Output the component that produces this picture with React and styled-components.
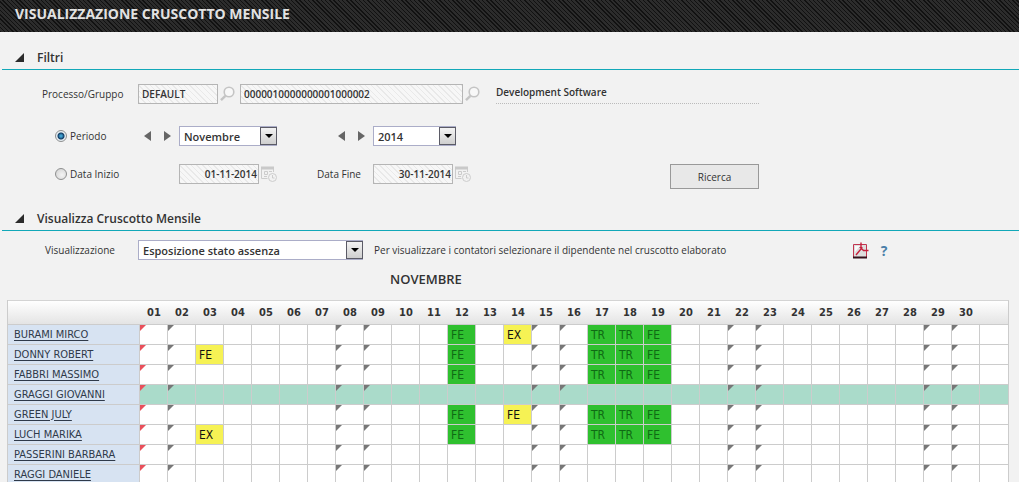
import React, { useState } from 'react';
import styled, { createGlobalStyle, css } from 'styled-components';

const months = [
  'Gennaio', 'Febbraio', 'Marzo', 'Aprile', 'Maggio', 'Giugno',
  'Luglio', 'Agosto', 'Settembre', 'Ottobre', 'Novembre', 'Dicembre',
];
const years = ['2013', '2014', '2015'];
const days = Array.from({ length: 30 }, (_, i) => i + 1);
const holidays = [1];
const weekends = [2, 8, 9, 15, 16, 22, 23, 29, 30];

const approved = { 12: 'FE', 17: 'TR', 18: 'TR', 19: 'FE' };

const employees = [
  { name: 'BURAMI MIRCO', approved, pending: { 14: 'EX' } },
  { name: 'DONNY ROBERT', approved, pending: { 3: 'FE' } },
  { name: 'FABBRI MASSIMO', approved, pending: {} },
  { name: 'GRAGGI GIOVANNI', approved: {}, pending: {}, selected: true },
  { name: 'GREEN JULY', approved, pending: { 14: 'FE' } },
  { name: 'LUCH MARIKA', approved, pending: { 3: 'EX' } },
  { name: 'PASSERINI BARBARA', approved: {}, pending: {} },
  { name: 'RAGGI DANIELE', approved: {}, pending: {} },
];

function SearchIcon() {
  return (
    <svg width="15" height="16" viewBox="0 0 15 16" fill="none" stroke="#c4c4c4">
      <circle cx="9" cy="6" r="4.8" fill="#f8f8f8" strokeWidth="1.6" />
      <path d="M5.400 9.800 L1 14.200" strokeWidth="2.400" />
    </svg>
  );
}

function CalendarIcon() {
  return (
    <svg width="16" height="16" viewBox="0 0 16 16" fill="none" stroke="#cccccc">
      <path d="M0 0.5h13v3H0z" fill="#c9c9c9" stroke="none" />
      <path d="M0.5 3v9.5h6M12.500 3v3" />
      <path d="M3.500 5.500h3v3h-3zM8 5.500h3M3 10.500h3" />
      <circle cx="11.500" cy="11.500" r="4" fill="#f2f2f2" />
      <path d="M11.500 9v3h2" />
    </svg>
  );
}

function PdfIcon() {
  return (
    <svg width="17" height="17" viewBox="0 0 17 17" fill="none">
      <path d="M1.500 2.500h13v13h-13z" fill="#dedede" stroke="#c23550" />
      <path d="M3 4h5L3 10z" fill="#fafafa" />
      <path d="M1 15.500h14" stroke="#35101a" strokeWidth="2" />
      <path d="M4 13 L9 7 V0.500 M9 6 L11.500 8.500 H16.500" stroke="#c5203c" strokeWidth="1.400" />
      <path d="M7.500 5.500h3" stroke="#c5203c" />
    </svg>
  );
}

function Stepper({ label, onStep }) {
  return (
    <Steps>
      <StepButton type="button" aria-label={`${label} precedente`} onClick={() => onStep(-1)}>
        <svg width="7" height="10" viewBox="0 0 7 10"><path d="M7 0v10L0 5z" fill="#666" /></svg>
      </StepButton>
      <StepButton type="button" aria-label={`${label} successivo`} onClick={() => onStep(1)}>
        <svg width="7" height="10" viewBox="0 0 7 10"><path d="M0 0v10l7-5z" fill="#666" /></svg>
      </StepButton>
    </Steps>
  );
}

function DropDown({ width, ...props }) {
  return (
    <SelectBox $width={width}>
      <Select {...props} />
      <SelectArrow aria-hidden="true">
        <svg width="8" height="4" viewBox="0 0 8 4"><path d="M0 0h8L4 4z" fill="#000" /></svg>
      </SelectArrow>
    </SelectBox>
  );
}

function SectionHeading({ children }) {
  return (
    <SectionTitle>
      <svg width="9" height="9" viewBox="0 0 9 9"><path d="M9 0v9H0z" fill="#2b2b2b" /></svg>
      {children}
    </SectionTitle>
  );
}

function Filters() {
  const [mode, setMode] = useState('periodo');
  const [month, setMonth] = useState(10);
  const [year, setYear] = useState(1);

  const stepMonth = (n) => setMonth((month + n + 12) % 12);
  const stepYear = (n) => setYear(Math.min(years.length - 1, Math.max(0, year + n)));

  return (
    <FilterForm onSubmit={(e) => e.preventDefault()}>
      <Row $spaced>
        <LabelCell htmlFor="processo">Processo/Gruppo</LabelCell>
        <TextInput id="processo" $width={80} defaultValue="DEFAULT" readOnly />
        <IconButton type="button" aria-label="Cerca processo"><SearchIcon /></IconButton>
        <TextInput aria-label="Codice gruppo" $width={223} defaultValue="0000010000000001000002" readOnly />
        <IconButton type="button" aria-label="Cerca gruppo"><SearchIcon /></IconButton>
        <GroupName>Development Software</GroupName>
      </Row>
      <Row>
        <RadioLabel>
          <Radio name="mode" checked={mode === 'periodo'} onChange={() => setMode('periodo')} />
          Periodo
        </RadioLabel>
        <Stepper label="Mese" onStep={stepMonth} />
        <PeriodField>
          <DropDown width={98} aria-label="Mese" value={month} onChange={(e) => setMonth(Number(e.target.value))}>
            {months.map((m, i) => <option key={m} value={i}>{m}</option>)}
          </DropDown>
        </PeriodField>
        <Stepper label="Anno" onStep={stepYear} />
        <DropDown width={83} aria-label="Anno" value={year} onChange={(e) => setYear(Number(e.target.value))}>
          {years.map((y, i) => <option key={y} value={i}>{y}</option>)}
        </DropDown>
      </Row>
      <Row>
        <RadioLabel $wide>
          <Radio name="mode" checked={mode === 'date'} onChange={() => setMode('date')} />
          Data Inizio
        </RadioLabel>
        <DateField>
          <TextInput aria-label="Data Inizio" $width={80} $right defaultValue="01-11-2014" readOnly />
          <IconButton type="button" aria-label="Calendario inizio"><CalendarIcon /></IconButton>
        </DateField>
        <EndLabel htmlFor="fine">Data Fine</EndLabel>
        <DateField $last>
          <TextInput id="fine" $width={80} $right defaultValue="30-11-2014" readOnly />
          <IconButton type="button" aria-label="Calendario fine"><CalendarIcon /></IconButton>
        </DateField>
        <SearchButton type="submit">Ricerca</SearchButton>
      </Row>
    </FilterForm>
  );
}

function Dashboard() {
  return (
    <Grid>
      <colgroup>
        <NameCol />
        {days.map((d) => <DayCol key={d} />)}
        <col />
      </colgroup>
      <thead>
        <tr>
          <HeadCell />
          {days.map((d) => <HeadCell key={d}>{String(d).padStart(2, '0')}</HeadCell>)}
          <HeadCell $last />
        </tr>
      </thead>
      <tbody>
        {employees.map((e) => (
          <tr key={e.name}>
            <NameCell><NameLink href="#">{e.name}</NameLink></NameCell>
            {days.map((d) => (
              <DayCell
                key={d}
                $selected={e.selected}
                $approved={!!e.approved[d]}
                $pending={!!e.pending[d]}
                $mark={holidays.includes(d) ? '#e8505b' : weekends.includes(d) ? '#777777' : null}
              >
                {e.approved[d] || e.pending[d]}
              </DayCell>
            ))}
            <DayCell $selected={e.selected} />
          </tr>
        ))}
      </tbody>
    </Grid>
  );
}

function App() {
  return (
    <Page>
      <GlobalStyle />
      <TopBar>
        <PageTitle>VISUALIZZAZIONE CRUSCOTTO MENSILE</PageTitle>
      </TopBar>
      <SectionHeading>Filtri</SectionHeading>
      <Filters />
      <SectionHeading>Visualizza Cruscotto Mensile</SectionHeading>
      <ViewBar>
        <ViewLabel htmlFor="vista">Visualizzazione</ViewLabel>
        <DropDown width={225} id="vista" defaultValue="assenza">
          <option value="assenza">Esposizione stato assenza</option>
        </DropDown>
        <Hint>Per visualizzare i contatori selezionare il dipendente nel cruscotto elaborato</Hint>
        <Tools>
          <IconButton type="button" aria-label="Esporta PDF"><PdfIcon /></IconButton>
          <HelpButton type="button">?</HelpButton>
        </Tools>
      </ViewBar>
      <MonthTitle>NOVEMBRE</MonthTitle>
      <Dashboard />
    </Page>
  );
}

export default App;

const GlobalStyle = createGlobalStyle`
  body {
    margin: 0;
    background: #f2f2f2;
    overflow: hidden;
  }

  *, *::before, *::after {
    box-sizing: border-box;
  }

  button, input, select {
    font-family: inherit;
    color: inherit;
    margin: 0;
  }
`;

const Page = styled.div`
  font-family: 'Open Sans', 'Noto Sans', sans-serif;
  font-size: 10px;
  line-height: 16px;
  color: #333;
`;

const TopBar = styled.header`
  height: 32px;
  padding: 4px 15px;
  background: repeating-linear-gradient(45deg, #111 0 1px, #2c2c2c 1px 3px);
`;

const PageTitle = styled.h1`
  margin: 0;
  font-size: 14px;
  line-height: 20px;
  font-weight: 700;
  color: #e2e2e2;
`;

const SectionTitle = styled.h2`
  display: flex;
  align-items: center;
  gap: 13px;
  margin: 0 0 0 2px;
  padding: 15px 0 1px 13px;
  border-bottom: 1px solid #12a8b8;
  font-size: 12px;
  line-height: 21px;
  font-weight: 600;
`;

const FilterForm = styled.form`
  display: flex;
  flex-direction: column;
  gap: 18px;
  padding: 14px 0 9px;
`;

const Row = styled.div`
  display: flex;
  align-items: center;
  height: 20px;
  margin-bottom: ${(p) => (p.$spaced ? 4 : 0)}px;
`;

const LabelCell = styled.label`
  width: 138px;
  padding-left: 42px;
`;

const TextInput = styled.input`
  width: ${(p) => p.$width}px;
  height: 20px;
  padding: 0 ${(p) => (p.$right ? 1 : 3)}px;
  border: 1px solid #b5b5b5;
  border-radius: 0;
  background: repeating-linear-gradient(45deg, #e9e9e9 0 1px, #f7f7f7 1px 4px);
  font-size: 10px;
  font-weight: 600;
  text-align: ${(p) => (p.$right ? 'right' : 'left')};
`;

const IconButton = styled.button`
  display: flex;
  align-items: center;
  width: 22px;
  height: 20px;
  padding: 0 0 0 2px;
  border: 0;
  background: none;
`;

const GroupName = styled.output`
  width: 263px;
  height: 20px;
  margin-left: 11px;
  border-bottom: 1px dotted #bbb;
  font-weight: 600;
`;

const RadioLabel = styled.label`
  display: flex;
  align-items: center;
  gap: 3px;
  width: ${(p) => (p.$wide ? 179 : 144)}px;
  padding-left: 55px;
`;

const Radio = styled.input.attrs({ type: 'radio' })`
  appearance: none;
  width: 12px;
  height: 12px;
  border: 1px solid #8e8f8f;
  border-radius: 50%;
  background: radial-gradient(circle at 60% 60%, #f4f4f4, #cfcfcf);

  &:checked {
    background: radial-gradient(circle, #3f9fcf 0 1px, #103a63 3px, #e6eef3 4px);
  }
`;

const Steps = styled.div`
  display: flex;
  gap: 13px;
  width: 35px;
`;

const StepButton = styled.button`
  display: flex;
  padding: 0;
  border: 0;
  background: none;
`;

const SelectBox = styled.div`
  position: relative;
  width: ${(p) => p.$width}px;
`;

const Select = styled.select`
  display: block;
  appearance: none;
  width: 100%;
  height: 20px;
  padding: 0 20px 0 4px;
  border: 1px solid #abadc8;
  border-radius: 0;
  background: #fff;
  font-size: 11px;
  font-weight: 600;
`;

const SelectArrow = styled.span`
  position: absolute;
  top: 1px;
  right: 0;
  display: flex;
  align-items: center;
  justify-content: center;
  width: 17px;
  height: 18px;
  border: 1px solid #5b5b66;
  background: linear-gradient(#f3f3f3, #cfcfcf);
  pointer-events: none;
`;

const PeriodField = styled.div`
  width: 159px;
`;

const DateField = styled.div`
  display: flex;
  width: ${(p) => (p.$last ? 297 : 138)}px;
`;

const EndLabel = styled.label`
  width: 56px;
`;

const SearchButton = styled.button`
  align-self: flex-start;
  width: 89px;
  height: 25px;
  border: 1px solid #999;
  background: #e8e8e8;
  font-size: 10px;
`;

const ViewBar = styled.div`
  display: flex;
  align-items: center;
  padding: 9px 0;
`;

const ViewLabel = styled.label`
  width: 138px;
  padding-left: 45px;
`;

const Hint = styled.span`
  flex: 1;
  margin-left: 11px;
`;

const Tools = styled.div`
  display: flex;
  align-items: center;
  gap: 6px;
  width: 169px;
`;

const HelpButton = styled.button`
  padding: 0;
  width: 12px;
  border: 0;
  background: none;
  font-size: 14px;
  font-weight: 700;
  color: #4a7fa8;
`;

const MonthTitle = styled.h3`
  margin: 0;
  padding: 0 0 11px 390px;
  font-size: 13px;
  line-height: 20px;
  font-weight: 600;
`;

const Grid = styled.table`
  width: calc(100% - 17px);
  margin-left: 7px;
  table-layout: fixed;
  border-collapse: separate;
  border-spacing: 0;
  border-left: 1px solid #ccc;
  background: #fff;
  font-family: 'DejaVu Sans Condensed', 'DejaVu Sans', sans-serif;
  font-size: 11px;
`;

const NameCol = styled.col`
  width: 132px;
`;

const DayCol = styled.col`
  width: 28px;
`;

const HeadCell = styled.th`
  height: 25px;
  padding: 0;
  border-top: 1px solid #d4d4d4;
  border-bottom: 1px solid #ccc;
  border-right: ${(p) => (p.$last ? '1px solid #ccc' : '0')};
  background: linear-gradient(#fff, #e4e4e4);
  font-weight: 700;
`;

const NameCell = styled.td`
  height: 20px;
  padding: 0 0 0 6px;
  border-right: 1px solid #ccc;
  border-bottom: 1px solid #ccc;
  background: #d7e3f2;
`;

const NameLink = styled.a`
  color: #2f3a4a;
  text-decoration: underline;
  text-underline-offset: 2px;
`;

const DayCell = styled.td`
  position: relative;
  height: 20px;
  padding: 0 0 0 3px;
  border-right: 1px solid #ccc;
  border-bottom: 1px solid #ccc;
  background: ${(p) => (p.$selected ? '#aadbca' : '#fff')};
  font-size: 12px;
  color: #111;

  ${(p) => p.$approved && css`
    background: #2fc02f;
    color: #0f6a14;
  `}

  ${(p) => p.$pending && css`
    background: #f6f254;
  `}

  /* holiday / weekend corner */
  ${(p) => p.$mark && css`
    &::before {
      content: '';
      position: absolute;
      top: 0;
      left: 0;
      border-top: 6px solid ${p.$mark};
      border-right: 6px solid transparent;
    }
  `}
`;
